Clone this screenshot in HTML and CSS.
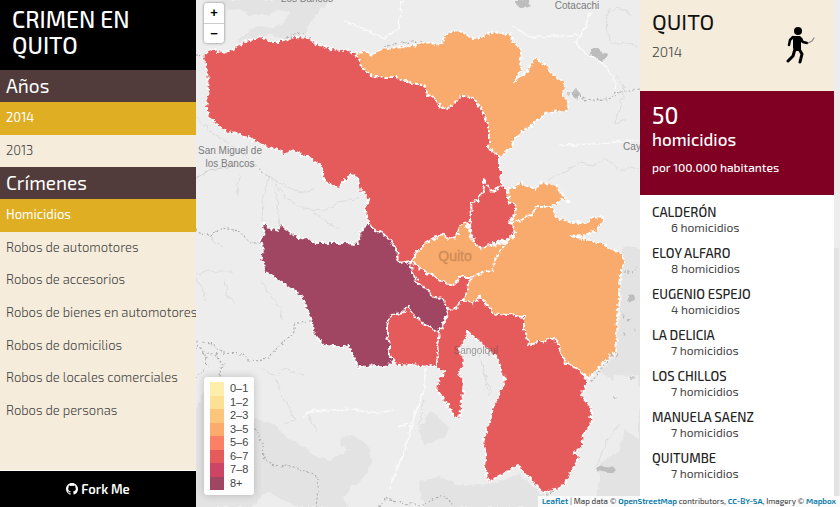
FILE: index.html
```html
<!DOCTYPE html>
<html lang="es">
<head>
<meta charset="utf-8">
<title>Crimen en Quito</title>
<link rel="stylesheet" href="styles.css">
</head>
<body>
<aside class="sidebar">
  <h1 class="brand">CRIMEN EN QUITO</h1>
  <nav class="menu">
    <h2>Años</h2>
    <ul class="years">
      <li><a class="active" href="#2014">2014</a></li>
      <li><a href="#2013">2013</a></li>
    </ul>
    <h2>Crímenes</h2>
    <ul class="crimes">
      <li><a class="active" href="#homicidios">Homicidios</a></li>
      <li><a href="#automotores">Robos de automotores</a></li>
      <li><a href="#accesorios">Robos de accesorios</a></li>
      <li><a href="#bienes">Robos de bienes en automotores</a></li>
      <li><a href="#domicilios">Robos de domicilios</a></li>
      <li><a href="#locales">Robos de locales comerciales</a></li>
      <li><a href="#personas">Robos de personas</a></li>
    </ul>
  </nav>
  <a class="fork" href="#fork">
    <svg width="12" height="12" viewBox="0 0 16 16" aria-hidden="true"><path fill="#fff" d="M8 0C3.580 0 0 3.580 0 8c0 3.540 2.290 6.530 5.470 7.590.4.070.55-.17.55-.38v-1.490c-2.230.48-2.700-1.070-2.700-1.070-.36-.93-.89-1.170-.89-1.170-.73-.5.060-.49.060-.49.8.060 1.230.83 1.230.83.71 1.220 1.870.87 2.330.66.070-.52.28-.87.51-1.070-1.780-.2-3.640-.89-3.640-3.950 0-.87.31-1.590.82-2.150-.08-.2-.36-1.020.08-2.120 0 0 .67-.21 2.200.82a7.600 7.600 0 0 1 4 0c1.530-1.040 2.200-.82 2.200-.82.44 1.100.16 1.920.08 2.120.51.56.82 1.270.82 2.150 0 3.070-1.870 3.750-3.650 3.950.29.25.54.73.54 1.480v2.200c0 .21.15.46.55.38A8 8 0 0 0 16 8c0-4.420-3.580-8-8-8z"/></svg>
    <span>Fork Me</span>
  </a>
</aside>

<main class="map">
  <svg class="canvas" viewBox="196 0 644 507" preserveAspectRatio="xMidYMid slice" role="img" aria-label="Mapa de Quito">
    <defs>
      <filter id="coast" color-interpolation-filters="sRGB" filterUnits="userSpaceOnUse" x="196" y="0" width="644" height="507">
        <feTurbulence type="fractalNoise" baseFrequency="0.16" numOctaves="2" seed="4"/>
        <feDisplacementMap in="SourceGraphic" scale="6" xChannelSelector="R" yChannelSelector="G"/>
        <feOffset dx="-1" dy="0"/>
      </filter>
    </defs>
    <rect x="196" y="0" width="644" height="507" fill="#ededed"/>
    <g filter="url(#coast)">
      <g fill="#e3e3e3">
        <path d="M224 0H332L322 10 312 22 303 40 285 39 270 35 255 38 238 42 250 30 262 26 275 28 285 22 291 12 280 9 270 15 250 15 240 8 226 10Z"/>
        <path d="M196 410L204 395 205 378 254 400 254 418 275 424 285 436 305 447 316 457 330 460 345 453 350 450 340 443 343 437 355 436 368 444 373 460 366 477 351 487 345 500 350 507H300L280 498 270 492 262 496 254 507H196Z"/>
        <path d="M420 482L440 477 465 486 490 485 520 475 535 487 545 496 560 507H425Z"/>
        <path d="M623 248H845V507H595L601 480 600 452 615 430 626 410 628 395 618 382 600 372 617 355 622 300Z"/>
        <path d="M432 410L450 428 443 440 425 444 420 430Z"/>
      </g>
      <g fill="#ededed">
        <path d="M615 375L640 376V440L620 425 618 400Z"/>
        <path d="M592 400L615 400 628 425 620 450 600 465 588 460Z"/>
      </g>
      <g fill="#bdbdbd">
        <path d="M517 1L529 0 532 6 524 8 517 5Z"/>
        <path d="M592 49L598 48 608 53 607 60 599 61 593 57Z"/>
        <path d="M577 88L582 93 577 98 571 93Z"/>
        <path d="M598 467L612 466 617 471 608 473 599 471Z"/>
        <path d="M628 295L635 296 636 301 630 303Z"/>
        <path d="M623 314L626 317 624 319ZM629 319L632 321 629 323ZM623 333L627 335 624 336ZM634 328L637 331 635 332ZM630 376L637 378 633 379ZM615 396L618 398 615 399ZM616 356L620 352 618 358Z"/>
      </g>
      <g fill="none" stroke="#dcdcdc" stroke-width="1">
        <path d="M196 115L210 130 228 143 247 155 262 170 275 181 300 193 315 190M274 178L286 197 300 207 322 211 345 200 360 199M269 178L264 200 263 223M277 188L281 226M240 176L238 195M315 212L330 224 340 230M210 235L222 247"/>
        <path d="M196 275L210 271 235 271M196 279L205 290 206 302M226 279L228 293 236 305M262 281L275 300 282 310 283 320"/>
        <path d="M264 370L277 376 285 368 305 376M276 378L284 397 292 410 295 420 284 424M310 415L317 432"/>
        <path d="M549 180L580 163 596 165 607 158 622 172 632 166 640 170M610 8L607 28 613 45 625 42 640 47M606 15L618 7 632 14M616 75L625 86 622 105 615 125 628 118"/>
        <path d="M480 355L486 375 494 393M483 365L490 395M598 465L606 445 620 425M424 400L420 430"/>
      </g>
      <g fill="none" stroke="#fafafa" stroke-width="1.500">
        <path d="M592 12L583 35 576 42 586 53 605 64 613 76 617 90M403 0L400 28 385 38 345 20M514 26L530 37 580 35M560 145L600 144 640 140"/>
        <path d="M426 368V388L414 420 406 450 390 488M304 418L310 412 345 409 380 413 395 410M398 427L410 424M560 340H600"/>
      </g>
      <path d="M196 180L210 170 235 166 258 166 270 178" fill="none" stroke="#d0d0d0"/>
      <g fill="none" stroke="#adadad" stroke-width="1.200" stroke-dasharray="2 2">
        <path d="M196 230L211 236 223 228 240 231 252 243 262 243M196 55L205 56M287 38L298 34 313 38M385 47L400 43 425 41M568 94L577 94 587 101 613 98 617 92 640 89"/>
        <path d="M196 341L212 343 223 353 243 354 250 361 270 358 280 345 292 337 297 323 312 322M198 345L206 355 208 367 198 375 196 381M204 352L218 355 224 365 220 380"/>
        <path d="M254 424L263 442 264 458 275 465 295 467 315 474 320 480 317 507M380 507L387 498 400 503 425 505 435 498 447 496 455 507M624 273L633 273 640 265M616 352L607 362 592 382M585 435L583 448M548 495L554 490 560 486"/>
      </g>
    </g>
    <g class="places">
      <text x="307" y="2">Los Bancos</text>
      <text x="577" y="9">Cotacachi</text>
      <text x="632" y="150">Cay</text>
      <text x="230" y="154">San Miguel de</text>
      <text x="230" y="167">los Bancos</text>
    </g>
    <g class="districts" filter="url(#coast)">
      <path class="high" d="M203 58L214 48 218 52 230 51 240 45 250 40 263 37 272 42 282 42 295 37 309 38 317 43 330 49 345 50 347 48 355 54 359 57 363 67 373 75 385 78 397 78 410 82 422 85 427 87 428 93 436 100 440 106 448 109 455 104 461 96 474 97 482 108 486 118 491 125 491 138 489 147 500 157 500 170 503 180 503 185 498 187 493 193 486 181 482 195 478 201 472 202 473 215 471 225 466 222 460 230 457 237 449 239 443 234 436 238 425 245 418 252 411 261 400 263 399 255 396 247 391 240 383 233 373 228 369 223 366 205 371 202 361 190 359 180 353 173 346 180 339 187 326 182 322 165 311 158 293 150 285 154 283 151 263 145 249 137 229 132 216 123 210 117 207 107 210 90 207 63Z"/>
      <path class="mid" d="M356 53L366 52 374 55 386 48 409 47 426 42 442 45 447 35 453 31 465 32 472 38 483 37 492 32 502 33 506 35 512 33 513 42 523 50 522 68 516 81 525 75 537 58 548 67 555 75 565 82 564 95 570 102 567 111 550 112 533 125 517 137 512 147 502 157 489 147 491 138 491 125 486 118 482 108 474 97 461 96 455 104 448 109 440 106 436 100 428 93 427 87 422 85 410 82 397 78 385 78 373 75 363 67Z"/>
      <path class="mid" d="M509 190L523 183 537 190 543 182 557 185 562 193 569 201 563 199 552 207 537 207 533 215 513 224 517 208 511 203Z"/>
      <path class="mid" d="M513 224L533 215 537 207 552 207 557 217 570 223 587 223 593 217 605 218 600 228 587 235 570 236 583 238 603 243 623 255 627 262 621 270 620 297 618 320 616 352 607 360 590 378 583 372 567 363 555 338 530 345 525 328 525 317 493 313 482 297 473 305 464 300 473 277 493 270 497 258 508 242 517 233Z"/>
      <path class="high" d="M486 181L493 193 503 185 509 192 511 203 517 207 511 222 516 231 510 239 495 243 482 248 476 243 473 235 471 225 473 215 472 202 478 201 482 195Z"/>
      <path class="mid" d="M411 261L418 252 425 245 436 238 443 234 449 239 457 237 460 228 466 222 471 232 472 238 476 243 482 248 508 242 497 258 493 270 473 277 460 277 455 285 445 283 437 277 426 272Z"/>
      <path class="high" d="M411 261L426 272 437 277 445 283 455 285 460 277 473 277 464 300 455 310 448 308 444 298 435 297 426 288 418 283 413 272Z"/>
      <path class="high" d="M464 300L473 305 482 297 493 313 525 317 525 328 530 345 555 338 567 363 583 372 588 382 582 395 593 410 592 422 585 435 583 445 575 452 580 458 573 470 565 485 545 493 535 482 518 465 490 482 486 470 487 455 484 440 490 425 493 412 500 395 506 380 499 360 485 345 468 330 467 338 460 350 465 360 460 375 465 382 461 418 455 415 437 388 445 372 437 366 440 355 438 345 440 332 447 320 448 308 455 310Z"/>
      <path class="high" d="M410 306L413 312 424 324 440 332 438 345 440 355 437 366 421 366 394 363 391 355 391 345 388 337 388 325 393 315 405 312Z"/>
      <path class="top" d="M263 223L271 228 279 231 281 225 296 236 319 243 346 243 359 244 363 230 369 223 373 228 383 233 391 240 396 247 400 263 411 261 413 272 418 283 426 288 435 297 444 298 448 308 445 322 440 332 424 324 413 312 410 306 405 312 393 315 388 325 388 337 391 345 391 355 394 363 385 366 359 367 350 346 325 346 316 335 312 318 303 297 285 283 266 271 265 262 261 260 265 250 262 240 266 233Z"/>
    </g>
    <text class="city" x="455" y="261">Quito</text>
    <text class="muted-place" x="476" y="354">Sangolquí</text>
  </svg>

  <div class="zoom">
    <button type="button" aria-label="Acercar">+</button>
    <button type="button" aria-label="Alejar">−</button>
  </div>

  <ul class="legend">
    <li class="c0">0–1</li>
    <li class="c1">1–2</li>
    <li class="c2">2–3</li>
    <li class="c3">3–5</li>
    <li class="c4">5–6</li>
    <li class="c5">6–7</li>
    <li class="c6">7–8</li>
    <li class="c7">8+</li>
  </ul>

  <section class="panel">
    <header class="panel-head">
      <div>
        <h2>QUITO</h2>
        <p>2014</p>
      </div>
      <svg width="30" height="38" viewBox="0 0 30 38" aria-hidden="true">
        <circle cx="12" cy="4" r="4"/>
        <path d="M7 9H14L17 12 15 16 15 22 13 24 9 24 7 21Z"/>
        <g fill="none" stroke="#000" stroke-linecap="round" stroke-linejoin="round">
          <path stroke-width="2.500" d="M7 10L4 13 3 18M14 11L17 15 21 16"/>
          <path stroke-width="3" d="M9 22L7 29 2 34M13 22L16 27 14 35"/>
          <path stroke-width="1.200" stroke="#888" d="M22 16L26 14 28 11"/>
        </g>
      </svg>
    </header>
    <div class="total">
      <p class="count">50</p>
      <p class="kind">homicidios</p>
      <p class="rate">por 100.000 habitantes</p>
    </div>
    <dl class="zones">
      <div><dt>CALDERÓN</dt><dd>6 homicidios</dd></div>
      <div><dt>ELOY ALFARO</dt><dd>8 homicidios</dd></div>
      <div><dt>EUGENIO ESPEJO</dt><dd>4 homicidios</dd></div>
      <div><dt>LA DELICIA</dt><dd>7 homicidios</dd></div>
      <div><dt>LOS CHILLOS</dt><dd>7 homicidios</dd></div>
      <div><dt>MANUELA SAENZ</dt><dd>7 homicidios</dd></div>
      <div><dt>QUITUMBE</dt><dd>7 homicidios</dd></div>
    </dl>
  </section>

  <footer class="credits"><a href="#leaflet">Leaflet</a> | Map data © <a href="#osm">OpenStreetMap</a> contributors, <a href="#license">CC-BY-SA</a>, Imagery © <a href="#mapbox">Mapbox</a></footer>
</main>
</body>
</html>
```

FILE: styles.css
```css
* { box-sizing: border-box; }

body {
  margin: 0;
  min-height: 100vh;
  display: grid;
  grid-template-columns: 196px 1fr;
  font-family: "Exo 2", Roboto, sans-serif;
  font-size: 13px;
  color: #444;
}

h1, h2, p, ul, dl, dd { margin: 0; padding: 0; }
ul { list-style: none; }
a { text-decoration: none; }

/* Sidebar */
.sidebar {
  display: flex;
  flex-direction: column;
  background: #f5ecdb;
}
.brand {
  height: 70px;
  padding: 6px 12px;
  background: #000;
  color: #fff;
  font-size: 23px;
  font-weight: 500;
  line-height: 26px;
}
.menu { flex: 1; }
.menu h2 {
  padding: 0 6px;
  background: #513c3b;
  color: #fff;
  font-size: 19px;
  font-weight: 400;
  line-height: 32px;
}
.years, .crimes { display: grid; grid-auto-rows: 1fr; }
.years { height: 65px; }
.crimes { height: 228px; }
.menu li { display: grid; }
.menu a {
  display: flex;
  align-items: center;
  padding: 0 6px 2px;
  color: #444;
  font-weight: 300;
  white-space: nowrap;
}
.menu .active { background: #e0ae22; color: #fff; font-weight: 400; }
.fork {
  display: flex;
  align-items: center;
  justify-content: center;
  gap: 3px;
  height: 37px;
  border-top: 1px solid #fff;
  background: #000;
  color: #fff;
  font-size: 13px;
  font-weight: 600;
}

/* Map */
.map { position: relative; overflow: hidden; background: #ededed; }
.canvas { position: absolute; width: 100%; height: 100%; }
.canvas text { font-family: "Liberation Sans", Arial, sans-serif; text-anchor: middle; }
.places, .muted-place { font-size: 10px; fill: #7c7c7c; }
.muted-place { fill: #444; opacity: 0.5; }
.city { font-size: 14px; fill: #cf8d59; stroke: #cf8d59; stroke-width: 0.400; }
.districts path { stroke: #fff; stroke-width: 2; stroke-dasharray: 3 2; }
.districts .mid { fill: #f9aa6d; }
.districts .high { fill: #e55a5b; }
.districts .top { fill: #a04662; }

.zoom {
  position: absolute;
  top: 3px;
  left: 8px;
  width: 20px;
  border-radius: 3px;
  background: #fff;
  box-shadow: 0 0 3px rgba(0, 0, 0, 0.5);
}
.zoom button {
  display: block;
  width: 100%;
  height: 20px;
  padding: 0;
  border: 0;
  background: none;
  color: #000;
  font: bold 13px/20px "Liberation Sans", Arial, sans-serif;
}
.zoom button + button { border-top: 1px solid #ccc; }

.legend {
  position: absolute;
  left: 8px;
  bottom: 12px;
  display: grid;
  grid-auto-rows: 1fr;
  width: 50px;
  height: 118px;
  padding: 5px 6px;
  border-radius: 3px;
  background: rgba(255, 255, 255, 0.9);
  box-shadow: 0 0 8px rgba(0, 0, 0, 0.2);
  font: 11px/13px "Liberation Sans", Arial, sans-serif;
  white-space: nowrap;
}
.legend li { display: flex; gap: 6px; }
.legend li::before { content: ""; flex: none; width: 14px; background: var(--c); }
.c0 { --c: #fdeeac; }
.c1 { --c: #fce093; }
.c2 { --c: #fbc67b; }
.c3 { --c: #fbab6c; }
.c4 { --c: #fb8066; }
.c5 { --c: #e55a5b; }
.c6 { --c: #cc4564; }
.c7 { --c: #a04662; }

/* Results */
.panel {
  position: absolute;
  top: 0;
  right: 6px;
  width: 194px;
  background: #fff;
}
.panel-head {
  display: flex;
  justify-content: space-between;
  height: 91px;
  padding: 8px 18px 0 12px;
  background: #f5ecdb;
}
.panel-head h2 { color: #111; font-size: 22px; font-weight: 400; line-height: 26px; }
.panel-head p { margin-top: 8px; font-size: 14px; line-height: 20px; font-weight: 300; }
.panel-head svg { margin-top: 19px; }
.total {
  height: 104px;
  padding: 12px;
  background: #7f0023;
  color: #fff;
}
.count { font-size: 23px; font-weight: 500; line-height: 24px; }
.kind { font-size: 17px; font-weight: 500; line-height: 24px; }
.rate { margin-top: 6px; font-size: 12px; font-weight: 500; line-height: 20px; }
.zones { padding: 10px 12px 9px; }
.zones div { height: 41px; font-size: 12px; line-height: 15px; }
.zones div:last-child { height: auto; min-height: 40px; }
.zones dt { color: #222; font-size: 13px; font-weight: 500; }
.zones dd { padding-left: 19px; font-weight: 400; }

.credits {
  position: absolute;
  right: 0;
  bottom: 0;
  padding: 0 4px;
  background: rgba(255, 255, 255, 0.8);
  color: #333;
  font-size: 8px;
  line-height: 11px;
}
.credits a { color: #0078a8; font-weight: 600; }
```
